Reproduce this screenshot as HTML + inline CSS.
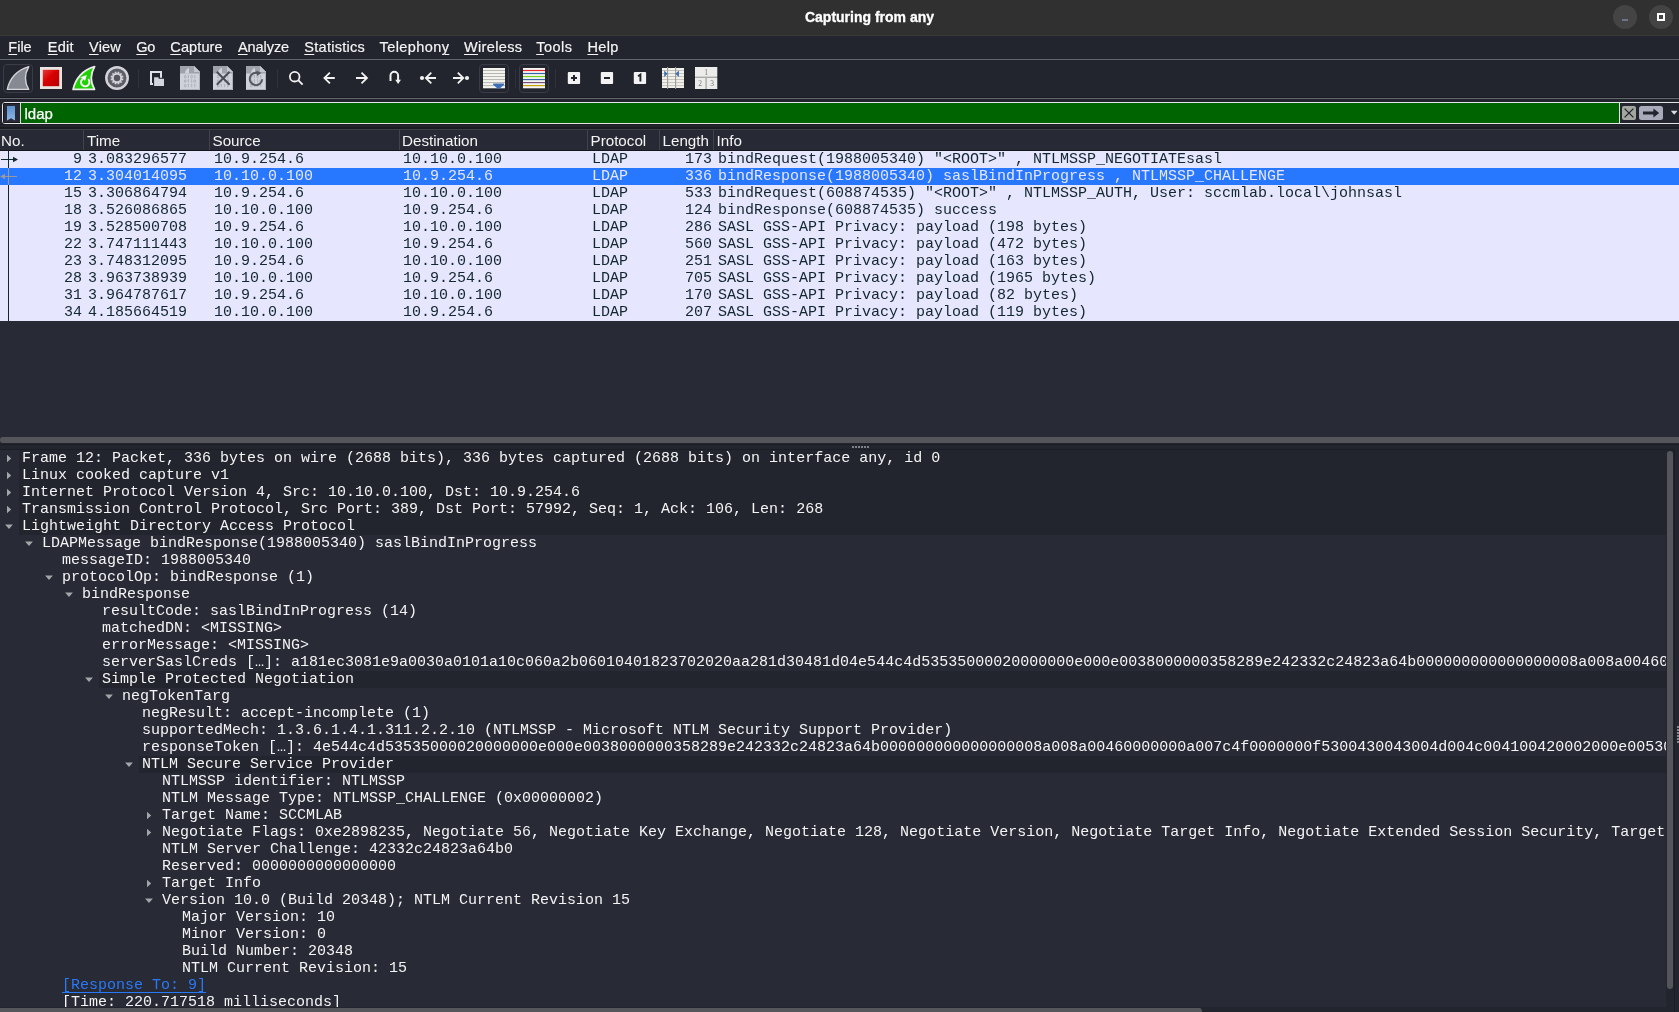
<!DOCTYPE html>
<html>
<head>
<meta charset="utf-8">
<title>Capturing from any</title>
<style>
*{box-sizing:border-box;margin:0;padding:0}
html,body{width:1679px;height:1012px;overflow:hidden;background:#22242e}
body{position:relative;font-family:"Liberation Sans",sans-serif;color:#f2f2f2}
.abs{position:absolute}
#w{position:absolute;left:0;top:0;width:1679px;height:1012px;overflow:hidden;will-change:transform}
svg{position:absolute;left:0;top:0;overflow:visible}
#titlebar{left:0;top:0;width:1679px;height:36px;background:#303030;border-bottom:1px solid #383838}
#title{left:0;top:0;width:1739px;height:36px;line-height:35px;text-align:center;font-weight:bold;font-size:14px;color:#fff;-webkit-text-stroke:0.3px #fff}
.wbtn{width:24px;height:24px;border-radius:50%;background:#444444;top:5px}
#menubar{left:0;top:36px;width:1679px;height:23px;background:#22242e}
.mi{position:absolute;top:0;height:23px;line-height:22px;font-size:14.5px;color:#f4f4f4;white-space:nowrap;-webkit-text-stroke:0.2px #f4f4f4}
.mi u{text-decoration:underline;text-underline-offset:2px;text-decoration-thickness:1px}
#sep1{left:0;top:59px;width:1679px;height:1px;background:#63646c}
#toolbar{left:0;top:60px;width:1679px;height:38px;background:#22242e}
#sep2{left:0;top:98px;width:1679px;height:1px;background:#66686f}
#sep2a{left:0;top:97px;width:1679px;height:1px;background:#191b22}
#filter{left:2px;top:102px;width:1690px;height:22px;border:1px solid #e4e4e4;border-radius:3px;background:#22242e;overflow:hidden}
#bookmark{left:0;top:0;width:17px;height:20px;background:#282a36;box-shadow:inset 1px 1px 0 #16171e,inset 0 -1px 0 #16171e}
#fgreen{left:17px;top:0;width:1600px;height:20px;background:#006400;border-left:1px solid #dcdcdc;border-right:1px solid #e4e4e4}
#ftext{left:21.5px;top:1px;height:20px;line-height:20px;font-size:15px;color:#fff;-webkit-text-stroke:0.25px #fff}
#band{left:0;top:124px;width:1679px;height:5px;background:#23252e;border-top:1px solid #1c1d25;border-bottom:2px solid #1a1b21}
#colhdr{left:0;top:129px;width:1679px;height:22px;background:#272a34;border-top:1px solid #3d3f49;border-bottom:1px solid #15161c}
.ch{position:absolute;top:1px;height:20px;line-height:20px;font-size:15.2px;color:#f4f4f4;white-space:nowrap}
.cs{position:absolute;top:0;width:1px;height:20px;background:#40424c}
#plist{left:0;top:151px;width:1679px;height:170px;background:#e7e6ff;font-family:"Liberation Mono",monospace;font-size:15px;color:#12272e}
.pr{position:absolute;left:0;width:1679px;height:17px;line-height:17px;white-space:pre}
.pr span{position:absolute;top:0;height:17px;line-height:17px}
.pr.sel{background:#2777ff;color:#e7e6ff}
#pempty{left:0;top:321px;width:1679px;height:128px;background:#282a36}
#hscroll1{left:0px;top:437px;width:1690px;height:6px;background:#55565c;border-radius:3px}
#splitline{left:0;top:448px;width:1679px;height:1px;background:#1e2028}
#tree{left:0;top:449px;width:1679px;height:563px;background:#282a36;font-family:"Liberation Mono",monospace;font-size:15px;color:#f4f4f4;overflow:hidden}
.tr{position:absolute;left:0;width:1679px;height:17px;line-height:17px;white-space:pre}
.tr .bg{position:absolute;top:0;height:17px;right:0;background:#23252e}
.tr .tx{position:absolute;top:0;height:17px;line-height:17px}
.tr .lk{color:#2979f6}
.tr .ul{position:absolute;top:15px;height:1px;background:#2979f6}
#vscroll{left:1655px;top:449px;width:24px;height:563px;background:#282a36}
#vthumb{left:1662px;top:451px;width:6px;height:538px;background:#55565c;border-radius:3px}
#hscroll2{left:0;top:1008px;width:1202px;height:6px;background:#55565c;border-radius:3px}
</style>
</head>
<body>
<div id="w">
<div id="titlebar" class="abs"></div>
<div id="title" class="abs">Capturing from any</div>
<div class="abs wbtn" style="left:1613px"></div><div class="abs" style="left:1622px;top:19px;width:6px;height:2px;background:#6f7389"></div>
<div class="abs wbtn" style="left:1649px"></div><div class="abs" style="left:1657px;top:13px;width:8px;height:8px;border:2px solid #fff"></div>
<div id="menubar" class="abs">
<div class="mi" style="left:8.3px;letter-spacing:0px"><u>F</u>ile</div>
<div class="mi" style="left:47.8px;letter-spacing:0.25px"><u>E</u>dit</div>
<div class="mi" style="left:89px;letter-spacing:0.2px"><u>V</u>iew</div>
<div class="mi" style="left:136.3px;letter-spacing:-0.25px"><u>G</u>o</div>
<div class="mi" style="left:170.3px;letter-spacing:0.12px"><u>C</u>apture</div>
<div class="mi" style="left:238px;letter-spacing:-0.07px"><u>A</u>nalyze</div>
<div class="mi" style="left:304.3px;letter-spacing:0.27px"><u>S</u>tatistics</div>
<div class="mi" style="left:379.6px;letter-spacing:0.4px">Telephon<u>y</u></div>
<div class="mi" style="left:464px;letter-spacing:0.34px"><u>W</u>ireless</div>
<div class="mi" style="left:536.2px;letter-spacing:0.5px"><u>T</u>ools</div>
<div class="mi" style="left:587.4px;letter-spacing:0.35px"><u>H</u>elp</div>
</div>
<div id="sep1" class="abs"></div>
<div id="toolbar" class="abs"><svg width="1679" height="38" viewBox="0 60 1679 38">
<defs><linearGradient id="rg" x1="0" y1="0" x2="1" y2="1"><stop offset="0" stop-color="#e83a3a"/><stop offset="0.45" stop-color="#d80000"/><stop offset="1" stop-color="#b80000"/></linearGradient><linearGradient id="bm" x1="0" y1="0" x2="0" y2="1"><stop offset="0" stop-color="#5f93d0"/><stop offset="1" stop-color="#8cb4e4"/></linearGradient></defs>
<line x1="138.5" y1="69" x2="138.5" y2="88" stroke="#2f313b" stroke-width="1"/>
<line x1="277.5" y1="69" x2="277.5" y2="88" stroke="#2f313b" stroke-width="1"/>
<line x1="515.5" y1="69" x2="515.5" y2="88" stroke="#2f313b" stroke-width="1"/>
<line x1="555.5" y1="69" x2="555.5" y2="88" stroke="#2f313b" stroke-width="1"/>
<rect x="3.5" y="64.5" width="29" height="28" rx="3.5" fill="#23252f" stroke="#3a3c47" stroke-width="1"/>
<path transform="translate(0,0)" d="M7.3,89.4 C9.4,79 16.8,69.8 28.8,66.6 C24.6,73.8 24.4,82 28.7,89.4 Z" fill="#878992" stroke="#d4d4d9" stroke-width="1.4" stroke-linejoin="round"/>
<rect x="40" y="67" width="22" height="22" fill="#e9e6e2"/>
<rect x="42.8" y="69.8" width="16.4" height="16.4" fill="url(#rg)"/>
<path transform="translate(65.8,0)" d="M7.3,89.4 C9.4,79 16.8,69.8 28.8,66.6 C24.6,73.8 24.4,82 28.7,89.4 Z" fill="#1fd005" stroke="#ececec" stroke-width="1.8" stroke-linejoin="round"/>
<path d="M88.2,79.2 A4.2,4.2 0 1 1 82.6,78.9" fill="none" stroke="#fff" stroke-width="1.9"/>
<path d="M80.4,77.3 L86.9,74.9 L85,80.7 Z" fill="#fff"/>
<circle cx="117" cy="78" r="10.7" fill="#5b5d67" stroke="#d2d2d8" stroke-width="2.5"/>
<line x1="121.44" y1="79.19" x2="123.28" y2="79.68" stroke="#d2d2d8" stroke-width="1.75"/>
<line x1="120.25" y1="81.25" x2="121.60" y2="82.60" stroke="#d2d2d8" stroke-width="1.75"/>
<line x1="118.19" y1="82.44" x2="118.68" y2="84.28" stroke="#d2d2d8" stroke-width="1.75"/>
<line x1="115.81" y1="82.44" x2="115.32" y2="84.28" stroke="#d2d2d8" stroke-width="1.75"/>
<line x1="113.75" y1="81.25" x2="112.40" y2="82.60" stroke="#d2d2d8" stroke-width="1.75"/>
<line x1="112.56" y1="79.19" x2="110.72" y2="79.68" stroke="#d2d2d8" stroke-width="1.75"/>
<line x1="112.56" y1="76.81" x2="110.72" y2="76.32" stroke="#d2d2d8" stroke-width="1.75"/>
<line x1="113.75" y1="74.75" x2="112.40" y2="73.40" stroke="#d2d2d8" stroke-width="1.75"/>
<line x1="115.81" y1="73.56" x2="115.32" y2="71.72" stroke="#d2d2d8" stroke-width="1.75"/>
<line x1="118.19" y1="73.56" x2="118.68" y2="71.72" stroke="#d2d2d8" stroke-width="1.75"/>
<line x1="120.25" y1="74.75" x2="121.60" y2="73.40" stroke="#d2d2d8" stroke-width="1.75"/>
<line x1="121.44" y1="76.81" x2="123.28" y2="76.32" stroke="#d2d2d8" stroke-width="1.75"/>
<circle cx="117" cy="78" r="4.2" fill="#54565f" stroke="#d2d2d8" stroke-width="2"/>
<rect x="151" y="72" width="10" height="12" fill="none" stroke="#dfe1e9" stroke-width="2"/>
<path d="M153,76.3 H159.6 V77.8 H165 V87 H153 Z" fill="#22242e"/>
<path d="M154.1,77.3 H158.6 V78.8 H164 V86 H154.1 Z" fill="#d3d5dd"/>
<path d="M180,66 H194 L200,72 V90 H180 Z" fill="#d0d2da"/><path d="M180,66 H194 L200,72 V73.5 H180 Z" fill="#9fa1ab"/><path d="M194,66 L200,72 H194 Z" fill="#c4c6ce"/><path d="M185,73.5 C185,70 187,68.5 189,68 L189,73.5 Z" fill="#d0d2da"/><path d="M199.5,72.5 V89.5 H180.5" fill="none" stroke="#aeb0ba" stroke-width="1"/><ellipse cx="185.2" cy="76.7" rx="0.85" ry="1.35" fill="none" stroke="#a3a5af" stroke-width="0.75"/><path d="M187.70000000000002,75.8 L188.4,75.10000000000001 V78.3" fill="none" stroke="#a3a5af" stroke-width="0.75"/><ellipse cx="191.6" cy="76.7" rx="0.85" ry="1.35" fill="none" stroke="#a3a5af" stroke-width="0.75"/><path d="M194.1,75.8 L194.79999999999998,75.10000000000001 V78.3" fill="none" stroke="#a3a5af" stroke-width="0.75"/><ellipse cx="185.2" cy="81.1" rx="0.85" ry="1.35" fill="none" stroke="#a3a5af" stroke-width="0.75"/><path d="M187.70000000000002,80.19999999999999 L188.4,79.5 V82.69999999999999" fill="none" stroke="#a3a5af" stroke-width="0.75"/><path d="M191.0,80.19999999999999 L191.7,79.5 V82.69999999999999" fill="none" stroke="#a3a5af" stroke-width="0.75"/><ellipse cx="194.7" cy="81.1" rx="0.85" ry="1.35" fill="none" stroke="#a3a5af" stroke-width="0.75"/><ellipse cx="185.2" cy="85.7" rx="0.85" ry="1.35" fill="none" stroke="#a3a5af" stroke-width="0.75"/><path d="M187.70000000000002,84.8 L188.4,84.10000000000001 V87.3" fill="none" stroke="#a3a5af" stroke-width="0.75"/><path d="M191.0,84.8 L191.7,84.10000000000001 V87.3" fill="none" stroke="#a3a5af" stroke-width="0.75"/><path d="M194.1,84.8 L194.79999999999998,84.10000000000001 V87.3" fill="none" stroke="#a3a5af" stroke-width="0.75"/>
<path d="M213,66 H227 L233,72 V90 H213 Z" fill="#d0d2da"/><path d="M213,66 H227 L233,72 V73.5 H213 Z" fill="#9fa1ab"/><path d="M227,66 L233,72 H227 Z" fill="#c4c6ce"/><path d="M218,73.5 C218,70 220,68.5 222,68 L222,73.5 Z" fill="#d0d2da"/><path d="M232.5,72.5 V89.5 H213.5" fill="none" stroke="#aeb0ba" stroke-width="1"/><ellipse cx="218.2" cy="76.7" rx="0.85" ry="1.35" fill="none" stroke="#a3a5af" stroke-width="0.75"/><path d="M220.70000000000002,75.8 L221.4,75.10000000000001 V78.3" fill="none" stroke="#a3a5af" stroke-width="0.75"/><ellipse cx="224.6" cy="76.7" rx="0.85" ry="1.35" fill="none" stroke="#a3a5af" stroke-width="0.75"/><path d="M227.1,75.8 L227.79999999999998,75.10000000000001 V78.3" fill="none" stroke="#a3a5af" stroke-width="0.75"/><ellipse cx="218.2" cy="81.1" rx="0.85" ry="1.35" fill="none" stroke="#a3a5af" stroke-width="0.75"/><path d="M220.70000000000002,80.19999999999999 L221.4,79.5 V82.69999999999999" fill="none" stroke="#a3a5af" stroke-width="0.75"/><path d="M224.0,80.19999999999999 L224.7,79.5 V82.69999999999999" fill="none" stroke="#a3a5af" stroke-width="0.75"/><ellipse cx="227.7" cy="81.1" rx="0.85" ry="1.35" fill="none" stroke="#a3a5af" stroke-width="0.75"/><ellipse cx="218.2" cy="85.7" rx="0.85" ry="1.35" fill="none" stroke="#a3a5af" stroke-width="0.75"/><path d="M220.70000000000002,84.8 L221.4,84.10000000000001 V87.3" fill="none" stroke="#a3a5af" stroke-width="0.75"/><path d="M224.0,84.8 L224.7,84.10000000000001 V87.3" fill="none" stroke="#a3a5af" stroke-width="0.75"/><path d="M227.1,84.8 L227.79999999999998,84.10000000000001 V87.3" fill="none" stroke="#a3a5af" stroke-width="0.75"/>
<path d="M216.8,71.8 L229.6,84.8 M229.6,71.8 L216.8,84.8" stroke="#4b4d57" stroke-width="2" fill="none"/>
<path d="M246,66 H260 L266,72 V90 H246 Z" fill="#d0d2da"/><path d="M246,66 H260 L266,72 V73.5 H246 Z" fill="#9fa1ab"/><path d="M260,66 L266,72 H260 Z" fill="#c4c6ce"/><path d="M251,73.5 C251,70 253,68.5 255,68 L255,73.5 Z" fill="#d0d2da"/><path d="M265.5,72.5 V89.5 H246.5" fill="none" stroke="#aeb0ba" stroke-width="1"/><ellipse cx="251.2" cy="76.7" rx="0.85" ry="1.35" fill="none" stroke="#a3a5af" stroke-width="0.75"/><path d="M253.70000000000002,75.8 L254.4,75.10000000000001 V78.3" fill="none" stroke="#a3a5af" stroke-width="0.75"/><ellipse cx="257.6" cy="76.7" rx="0.85" ry="1.35" fill="none" stroke="#a3a5af" stroke-width="0.75"/><path d="M260.09999999999997,75.8 L260.8,75.10000000000001 V78.3" fill="none" stroke="#a3a5af" stroke-width="0.75"/><ellipse cx="251.2" cy="81.1" rx="0.85" ry="1.35" fill="none" stroke="#a3a5af" stroke-width="0.75"/><path d="M253.70000000000002,80.19999999999999 L254.4,79.5 V82.69999999999999" fill="none" stroke="#a3a5af" stroke-width="0.75"/><path d="M257.0,80.19999999999999 L257.70000000000005,79.5 V82.69999999999999" fill="none" stroke="#a3a5af" stroke-width="0.75"/><ellipse cx="260.7" cy="81.1" rx="0.85" ry="1.35" fill="none" stroke="#a3a5af" stroke-width="0.75"/><ellipse cx="251.2" cy="85.7" rx="0.85" ry="1.35" fill="none" stroke="#a3a5af" stroke-width="0.75"/><path d="M253.70000000000002,84.8 L254.4,84.10000000000001 V87.3" fill="none" stroke="#a3a5af" stroke-width="0.75"/><path d="M257.0,84.8 L257.70000000000005,84.10000000000001 V87.3" fill="none" stroke="#a3a5af" stroke-width="0.75"/><path d="M260.09999999999997,84.8 L260.8,84.10000000000001 V87.3" fill="none" stroke="#a3a5af" stroke-width="0.75"/>
<path d="M258.6,73.3 A6.2,6.2 0 1 0 262.2,79.3" fill="none" stroke="#555761" stroke-width="2"/>
<path d="M256.4,70.4 L261.4,72.9 L256.9,76 Z" fill="#555761"/>
<circle cx="294.7" cy="76.7" r="4.8" fill="none" stroke="#f2f2f2" stroke-width="1.8"/>
<line x1="298.2" y1="80.2" x2="302.6" y2="84.6" stroke="#f2f2f2" stroke-width="1.9"/>
<path d="M324.6,78 H334.8 M329.9,72.6 L324.4,78 L329.9,83.4" fill="none" stroke="#f2f2f2" stroke-width="1.8"/>
<path d="M356,78 H366.8 M361.5,72.6 L367,78 L361.5,83.4" fill="none" stroke="#f2f2f2" stroke-width="1.8"/>
<path d="M390.5,81 V75.6 A3.8,3.8 0 0 1 398.1,75.6 V80" fill="none" stroke="#f2f2f2" stroke-width="2"/>
<path d="M395.2,79.8 H401 L398.1,83.9 Z" fill="#f2f2f2"/>
<circle cx="422" cy="78" r="2.1" fill="#f2f2f2"/>
<path d="M425.8,78 H436 M431.3,72.6 L425.8,78 L431.3,83.4" fill="none" stroke="#f2f2f2" stroke-width="1.8"/>
<path d="M453,78 H463.2 M457.8,72.6 L463.3,78 L457.8,83.4" fill="none" stroke="#f2f2f2" stroke-width="1.8"/>
<circle cx="467" cy="78" r="2.1" fill="#f2f2f2"/>
<rect x="479.5" y="64.5" width="29" height="28" rx="3.5" fill="#23252f" stroke="#3a3c47" stroke-width="1"/>
<rect x="483" y="68" width="22" height="20.3" fill="#f3f3ef"/>
<line x1="483" y1="70.50" x2="505" y2="70.50" stroke="#b6b6ae" stroke-width="1"/>
<line x1="483" y1="73.52" x2="505" y2="73.52" stroke="#b6b6ae" stroke-width="1"/>
<line x1="483" y1="76.54" x2="505" y2="76.54" stroke="#b6b6ae" stroke-width="1"/>
<line x1="483" y1="79.56" x2="505" y2="79.56" stroke="#b6b6ae" stroke-width="1"/>
<line x1="483" y1="82.58" x2="505" y2="82.58" stroke="#b6b6ae" stroke-width="1"/>
<line x1="483" y1="85.60" x2="505" y2="85.60" stroke="#b6b6ae" stroke-width="1"/>
<path d="M493.4,83.6 H503.8 Q504.6,84.2 503.8,85 L499.4,88.8 Q498.6,89.3 497.8,88.8 L493.4,85 Q492.6,84.2 493.4,83.6 Z" fill="#3b6eb6"/>
<rect x="519.5" y="64.5" width="29" height="28" rx="3.5" fill="#23252f" stroke="#3a3c47" stroke-width="1"/>
<rect x="523" y="68" width="22" height="20.3" fill="#f6f6f4"/>
<line x1="523" y1="70.50" x2="545" y2="70.50" stroke="#ef2929" stroke-width="1.2"/>
<line x1="523" y1="73.52" x2="545" y2="73.52" stroke="#3465a4" stroke-width="1.2"/>
<line x1="523" y1="76.54" x2="545" y2="76.54" stroke="#73d216" stroke-width="1.2"/>
<line x1="523" y1="79.56" x2="545" y2="79.56" stroke="#3465a4" stroke-width="1.2"/>
<line x1="523" y1="82.58" x2="545" y2="82.58" stroke="#75507b" stroke-width="1.2"/>
<line x1="523" y1="85.60" x2="545" y2="85.60" stroke="#c4a000" stroke-width="1.2"/>
<rect x="567.8" y="71.9" width="12.3" height="12.2" rx="1" fill="#f3f3f3"/>
<rect x="600.8" y="71.9" width="12.3" height="12.2" rx="1" fill="#f3f3f3"/>
<rect x="633.8" y="71.9" width="12.3" height="12.2" rx="1" fill="#f3f3f3"/>
<path d="M571,78 H577 M574,75 V81" stroke="#22242e" stroke-width="2"/>
<path d="M604,78 H610" stroke="#22242e" stroke-width="2"/>
<path d="M638,76.2 L640.4,74.6 V81.6" fill="none" stroke="#22242e" stroke-width="1.9"/>
<rect x="662" y="68" width="22" height="20" fill="#f1f1ed"/>
<line x1="662" y1="70.50" x2="684" y2="70.50" stroke="#c2c2ba" stroke-width="1"/>
<line x1="662" y1="73.52" x2="684" y2="73.52" stroke="#c2c2ba" stroke-width="1"/>
<line x1="662" y1="76.54" x2="684" y2="76.54" stroke="#c2c2ba" stroke-width="1"/>
<line x1="662" y1="79.56" x2="684" y2="79.56" stroke="#c2c2ba" stroke-width="1"/>
<line x1="662" y1="82.58" x2="684" y2="82.58" stroke="#c2c2ba" stroke-width="1"/>
<line x1="662" y1="85.60" x2="684" y2="85.60" stroke="#c2c2ba" stroke-width="1"/>
<path d="M667.6,67 V89 M675.6,67 V89" stroke="#9c9c94" stroke-width="1.1"/>
<path d="M664.2,70.6 L667.6,73.8 L664.2,77 Z M678.9,70.6 L675.4,73.8 L678.9,77 Z" fill="#3b6eb6"/>
<rect x="695" y="67" width="22.2" height="22" fill="#a9a9a9"/>
<rect x="695" y="67" width="22.2" height="9.6" fill="#ececea"/>
<rect x="695" y="78" width="10.4" height="11" fill="#ececea"/>
<rect x="706.8" y="78" width="10.4" height="11" fill="#ececea"/>
<text x="706.1" y="74.7" font-family="Liberation Serif" font-size="7.5" fill="#777" text-anchor="middle">1</text>
<text x="700.2" y="86.4" font-family="Liberation Serif" font-size="7.5" fill="#777" text-anchor="middle">2</text>
<text x="712" y="86.4" font-family="Liberation Serif" font-size="7.5" fill="#777" text-anchor="middle">3</text>
</svg></div>
<div id="sep2a" class="abs"></div><div id="sep2" class="abs"></div>
<div id="filter" class="abs"><div id="bookmark" class="abs"></div><div id="fgreen" class="abs"></div><div id="ftext" class="abs">ldap</div><svg width="1690" height="20" viewBox="3 103 1690 20"><defs><linearGradient id="bm2" x1="0" y1="0" x2="0" y2="1"><stop offset="0" stop-color="#5e92cf"/><stop offset="1" stop-color="#8db5e5"/></linearGradient></defs><path d="M7,106 H15 V120.4 L11,118.3 L7,120.4 Z" fill="url(#bm2)"/><rect x="1622" y="106" width="14" height="14" rx="2" fill="#a3a59f"/><path d="M1624.6,108.6 L1633.4,117.4 M1633.4,108.6 L1624.6,117.4" stroke="#22242e" stroke-width="1.3"/><rect x="1639" y="106" width="24" height="14" rx="2.5" fill="#a9abba"/><path d="M1643,111.4 H1653.4 V108.4 L1659.2,113 L1653.4,117.6 V114.6 H1643 Z" fill="#22242e"/><path d="M1670.8,110.8 H1677.6 L1674.2,114.8 Z" fill="#dcdcdc"/></svg></div>
<div id="band" class="abs"></div>
<div id="colhdr" class="abs">
<div class="ch" style="left:1px">No.</div>
<div class="ch" style="left:87px">Time</div>
<div class="ch" style="left:212.5px">Source</div>
<div class="ch" style="left:402px">Destination</div>
<div class="ch" style="left:590.5px">Protocol</div>
<div class="ch" style="left:662.5px">Length</div>
<div class="ch" style="left:716.5px">Info</div>
<div class="cs" style="left:83px"></div>
<div class="cs" style="left:209px"></div>
<div class="cs" style="left:399px"></div>
<div class="cs" style="left:587px"></div>
<div class="cs" style="left:659px"></div>
<div class="cs" style="left:713px"></div>
</div>
<div id="plist" class="abs">
<div class="pr" style="top:0px"><span style="right:1597px">9</span><span style="left:88px">3.083296577</span><span style="left:214px">10.9.254.6</span><span style="left:403px">10.10.0.100</span><span style="left:592px">LDAP</span><span style="right:967px">173</span><span style="left:718px">bindRequest(1988005340) "&lt;ROOT&gt;" , NTLMSSP_NEGOTIATEsasl</span></div>
<div class="pr sel" style="top:17px"><span style="right:1597px">12</span><span style="left:88px">3.304014095</span><span style="left:214px">10.10.0.100</span><span style="left:403px">10.9.254.6</span><span style="left:592px">LDAP</span><span style="right:967px">336</span><span style="left:718px">bindResponse(1988005340) saslBindInProgress , NTLMSSP_CHALLENGE</span></div>
<div class="pr" style="top:34px"><span style="right:1597px">15</span><span style="left:88px">3.306864794</span><span style="left:214px">10.9.254.6</span><span style="left:403px">10.10.0.100</span><span style="left:592px">LDAP</span><span style="right:967px">533</span><span style="left:718px">bindRequest(608874535) "&lt;ROOT&gt;" , NTLMSSP_AUTH, User: sccmlab.local\johnsasl</span></div>
<div class="pr" style="top:51px"><span style="right:1597px">18</span><span style="left:88px">3.526086865</span><span style="left:214px">10.10.0.100</span><span style="left:403px">10.9.254.6</span><span style="left:592px">LDAP</span><span style="right:967px">124</span><span style="left:718px">bindResponse(608874535) success</span></div>
<div class="pr" style="top:68px"><span style="right:1597px">19</span><span style="left:88px">3.528500708</span><span style="left:214px">10.9.254.6</span><span style="left:403px">10.10.0.100</span><span style="left:592px">LDAP</span><span style="right:967px">286</span><span style="left:718px">SASL GSS-API Privacy: payload (198 bytes)</span></div>
<div class="pr" style="top:85px"><span style="right:1597px">22</span><span style="left:88px">3.747111443</span><span style="left:214px">10.10.0.100</span><span style="left:403px">10.9.254.6</span><span style="left:592px">LDAP</span><span style="right:967px">560</span><span style="left:718px">SASL GSS-API Privacy: payload (472 bytes)</span></div>
<div class="pr" style="top:102px"><span style="right:1597px">23</span><span style="left:88px">3.748312095</span><span style="left:214px">10.9.254.6</span><span style="left:403px">10.10.0.100</span><span style="left:592px">LDAP</span><span style="right:967px">251</span><span style="left:718px">SASL GSS-API Privacy: payload (163 bytes)</span></div>
<div class="pr" style="top:119px"><span style="right:1597px">28</span><span style="left:88px">3.963738939</span><span style="left:214px">10.10.0.100</span><span style="left:403px">10.9.254.6</span><span style="left:592px">LDAP</span><span style="right:967px">705</span><span style="left:718px">SASL GSS-API Privacy: payload (1965 bytes)</span></div>
<div class="pr" style="top:136px"><span style="right:1597px">31</span><span style="left:88px">3.964787617</span><span style="left:214px">10.9.254.6</span><span style="left:403px">10.10.0.100</span><span style="left:592px">LDAP</span><span style="right:967px">170</span><span style="left:718px">SASL GSS-API Privacy: payload (82 bytes)</span></div>
<div class="pr" style="top:153px"><span style="right:1597px">34</span><span style="left:88px">4.185664519</span><span style="left:214px">10.10.0.100</span><span style="left:403px">10.9.254.6</span><span style="left:592px">LDAP</span><span style="right:967px">207</span><span style="left:718px">SASL GSS-API Privacy: payload (119 bytes)</span></div>
<svg width="30" height="170" viewBox="0 151 30 170"><path d="M8.5,151 V168 M8.5,185 V321" stroke="#12272e" stroke-width="1"/><path d="M1,159.5 H14" stroke="#12272e" stroke-width="1"/><path d="M13,156.8 L18,159.5 L13,162.2 Z" fill="#12272e"/><path d="M8.5,168 V185" stroke="#9a9a9a" stroke-width="1"/><path d="M4,176.5 H17" stroke="#9a9a9a" stroke-width="1"/><path d="M5,173.8 L0,176.5 L5,179.2 Z" fill="#9a9a9a"/></svg>
</div>
<div id="pempty" class="abs"></div>
<div id="hscroll1" class="abs"></div>
<div class="abs" style="left:0;top:443px;width:1679px;height:7px;background:#22242e"></div>
<div class="abs" style="left:0;top:444px;width:1679px;height:1px;background:#1d1f27"></div>
<div class="abs" style="left:852px;top:446px;width:17px;height:2px;background:repeating-linear-gradient(90deg,#7f8189 0 2px,transparent 2px 3px)"></div>
<div id="tree" class="abs">
<div class="abs" style="left:0;top:0;width:1666px;height:563px;overflow:hidden">
<div class="tr" style="top:1px"><div class="bg" style="left:19px"></div><div class="tx" style="left:22px">Frame 12: Packet, 336 bytes on wire (2688 bits), 336 bytes captured (2688 bits) on interface any, id 0</div></div>
<div class="tr" style="top:18px"><div class="bg" style="left:19px"></div><div class="tx" style="left:22px">Linux cooked capture v1</div></div>
<div class="tr" style="top:35px"><div class="bg" style="left:19px"></div><div class="tx" style="left:22px">Internet Protocol Version 4, Src: 10.10.0.100, Dst: 10.9.254.6</div></div>
<div class="tr" style="top:52px"><div class="bg" style="left:19px"></div><div class="tx" style="left:22px">Transmission Control Protocol, Src Port: 389, Dst Port: 57992, Seq: 1, Ack: 106, Len: 268</div></div>
<div class="tr" style="top:69px"><div class="bg" style="left:19px"></div><div class="tx" style="left:22px">Lightweight Directory Access Protocol</div></div>
<div class="tr" style="top:86px"><div class="tx" style="left:42px">LDAPMessage bindResponse(1988005340) saslBindInProgress</div></div>
<div class="tr" style="top:103px"><div class="tx" style="left:62px">messageID: 1988005340</div></div>
<div class="tr" style="top:120px"><div class="tx" style="left:62px">protocolOp: bindResponse (1)</div></div>
<div class="tr" style="top:137px"><div class="tx" style="left:82px">bindResponse</div></div>
<div class="tr" style="top:154px"><div class="tx" style="left:102px">resultCode: saslBindInProgress (14)</div></div>
<div class="tr" style="top:171px"><div class="tx" style="left:102px">matchedDN: &lt;MISSING&gt;</div></div>
<div class="tr" style="top:188px"><div class="tx" style="left:102px">errorMessage: &lt;MISSING&gt;</div></div>
<div class="tr" style="top:205px"><div class="tx" style="left:102px">serverSaslCreds […]: a181ec3081e9a0030a0101a10c060a2b06010401823702020aa281d30481d04e544c4d53535000020000000e000e0038000000358289e242332c24823a64b000000000000000008a008a00460000000a007c4f0000000f5300430043004d004c0041004200</div></div>
<div class="tr" style="top:222px"><div class="bg" style="left:99px"></div><div class="tx" style="left:102px">Simple Protected Negotiation</div></div>
<div class="tr" style="top:239px"><div class="tx" style="left:122px">negTokenTarg</div></div>
<div class="tr" style="top:256px"><div class="tx" style="left:142px">negResult: accept-incomplete (1)</div></div>
<div class="tr" style="top:273px"><div class="tx" style="left:142px">supportedMech: 1.3.6.1.4.1.311.2.2.10 (NTLMSSP - Microsoft NTLM Security Support Provider)</div></div>
<div class="tr" style="top:290px"><div class="tx" style="left:142px">responseToken […]: 4e544c4d53535000020000000e000e0038000000358289e242332c24823a64b000000000000000008a008a00460000000a007c4f0000000f5300430043004d004c004100420002000e005300430043004d004c004100420001000800</div></div>
<div class="tr" style="top:307px"><div class="bg" style="left:139px"></div><div class="tx" style="left:142px">NTLM Secure Service Provider</div></div>
<div class="tr" style="top:324px"><div class="tx" style="left:162px">NTLMSSP identifier: NTLMSSP</div></div>
<div class="tr" style="top:341px"><div class="tx" style="left:162px">NTLM Message Type: NTLMSSP_CHALLENGE (0x00000002)</div></div>
<div class="tr" style="top:358px"><div class="tx" style="left:162px">Target Name: SCCMLAB</div></div>
<div class="tr" style="top:375px"><div class="tx" style="left:162px">Negotiate Flags: 0xe2898235, Negotiate 56, Negotiate Key Exchange, Negotiate 128, Negotiate Version, Negotiate Target Info, Negotiate Extended Session Security, Target Type Domain, Negotiate Always Sign</div></div>
<div class="tr" style="top:392px"><div class="tx" style="left:162px">NTLM Server Challenge: 42332c24823a64b0</div></div>
<div class="tr" style="top:409px"><div class="tx" style="left:162px">Reserved: 0000000000000000</div></div>
<div class="tr" style="top:426px"><div class="tx" style="left:162px">Target Info</div></div>
<div class="tr" style="top:443px"><div class="tx" style="left:162px">Version 10.0 (Build 20348); NTLM Current Revision 15</div></div>
<div class="tr" style="top:460px"><div class="tx" style="left:182px">Major Version: 10</div></div>
<div class="tr" style="top:477px"><div class="tx" style="left:182px">Minor Version: 0</div></div>
<div class="tr" style="top:494px"><div class="tx" style="left:182px">Build Number: 20348</div></div>
<div class="tr" style="top:511px"><div class="tx" style="left:182px">NTLM Current Revision: 15</div></div>
<div class="tr" style="top:528px"><div class="tx" style="left:62px"><span class="lk">[Response To: 9]</span></div><div class="ul" style="left:62px;width:144px"></div></div>
<div class="tr" style="top:545px"><div class="tx" style="left:62px">[Time: 220.717518 milliseconds]</div></div>
<svg width="300" height="563"><path d="M7,5.8 L11.2,9.5 L7,13.2 Z M7,22.8 L11.2,26.5 L7,30.2 Z M7,39.8 L11.2,43.5 L7,47.2 Z M7,56.8 L11.2,60.5 L7,64.2 Z M5.1,75.5 H12.9 L9,79.9 Z M25.1,92.5 H32.9 L29,96.9 Z M45.1,126.5 H52.9 L49,130.9 Z M65.1,143.5 H72.9 L69,147.9 Z M85.1,228.5 H92.9 L89,232.9 Z M105.1,245.5 H112.9 L109,249.9 Z M125.1,313.5 H132.9 L129,317.9 Z M147,362.8 L151.2,366.5 L147,370.2 Z M147,379.8 L151.2,383.5 L147,387.2 Z M147,430.8 L151.2,434.5 L147,438.2 Z M145.1,449.5 H152.9 L149,453.9 Z" fill="#a4a5a9"/></svg>
</div>
</div>
<div class="abs" style="left:0;top:449px;width:1675px;height:1px;background:#1c1e25"></div>
<div class="abs" style="left:1666px;top:450px;width:8px;height:562px;background:#23252e"></div>
<div class="abs" style="left:1674px;top:449px;width:1px;height:563px;background:#1b1d24"></div>
<div class="abs" style="left:1675px;top:449px;width:4px;height:563px;background:#22242e"></div>
<div class="abs" style="left:1667px;top:451px;width:6px;height:538px;background:#55565c;border-radius:3px"></div>
<div class="abs" style="left:0;top:1007px;width:1674px;height:5px;background:#22242e"></div>
<div class="abs" style="left:-4px;top:1008px;width:1206px;height:8px;background:#55565c;border-radius:3px"></div>
<div class="abs" style="left:1677px;top:726px;width:3px;height:17px;background:repeating-linear-gradient(180deg,#85878f 0 2px,transparent 2px 3px)"></div>
</div>
</body>
</html>
